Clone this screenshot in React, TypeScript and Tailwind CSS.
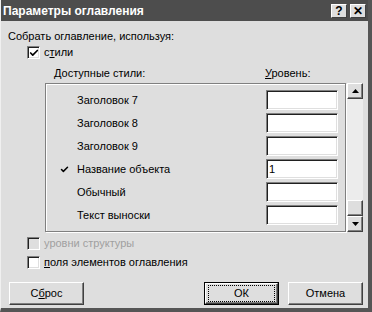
import { Check } from "lucide-react"

const font = { fontFamily: '"Liberation Sans", Arial, sans-serif' }

const rows = [
  { name: "Заголовок 7", level: "" },
  { name: "Заголовок 8", level: "" },
  { name: "Заголовок 9", level: "" },
  { name: "Название объекта", level: "1", used: true },
  { name: "Обычный", level: "" },
  { name: "Текст выноски", level: "" },
]

const CheckBox = ({ checked, disabled }: { checked?: boolean; disabled?: boolean }) => (
  <span
    className={`flex items-center justify-center size-[13px] border border-t-[#808080] border-l-[#808080] border-r-white border-b-white shadow-[inset_1px_1px_0_#202020,inset_-1px_-1px_0_#dfdfdf] ${
      disabled ? "bg-[#dedede]" : "bg-white"
    }`}
  >
    {checked && <Check size={10} strokeWidth={4} className="text-black" />}
  </span>
)

const Button = ({ label, def }: { label: React.ReactNode; def?: boolean }) => (
  <div
    className={`w-[75px] h-[23px] flex ${def ? "border border-black" : ""}`}
  >
    <div className="flex-1 flex items-center justify-center border border-t-white border-l-white border-r-[#404040] border-b-[#404040] shadow-[inset_-1px_-1px_0_#808080] bg-[#dedede]">
      {def ? (
        <span className="w-[67px] h-[17px] flex items-center justify-center border border-dotted border-black">
          {label}
        </span>
      ) : (
        label
      )}
    </div>
  </div>
)

const ScrollBtn = ({ up }: { up?: boolean }) => (
  <div className="size-[16px] flex items-center justify-center bg-[#dedede] border border-t-white border-l-white border-r-[#404040] border-b-[#404040] shadow-[inset_-1px_-1px_0_#808080]">
    <svg width="7" height="4" viewBox="0 0 7 4">
      <path d={up ? "M3.5 0 L7 4 L0 4 Z" : "M0 0 L7 0 L3.5 4 Z"} fill="#000" />
    </svg>
  </div>
)

export default function App() {
  return (
    <div
      style={font}
      className="w-[372px] h-[312px] bg-[#dedede] text-[11px] text-black flex flex-col border-l border-l-[#f0f0f0] border-r-4 border-r-[#555] border-b-4 border-b-[#555] overflow-hidden"
    >
      <div className="h-[21px] bg-[#4d4d4d] flex items-center pl-[2px] pr-[2px] shrink-0">
        <span className="text-white font-bold text-[12px] flex-1">Параметры оглавления</span>
        <div className="flex gap-[3px]">
          <div className="w-[16px] h-[14px] flex items-center justify-center bg-[#dedede] border border-t-white border-l-white border-r-[#404040] border-b-[#404040] font-bold text-[12px]">
            ?
          </div>
          <div className="w-[16px] h-[14px] flex items-center justify-center bg-[#dedede] border border-t-white border-l-white border-r-[#404040] border-b-[#404040] font-bold text-[12px]">
            ✕
          </div>
        </div>
      </div>

      <div className="flex-1 flex flex-col pl-[7px] pr-[5px] pt-[9px]">
        <div className="h-[13px] leading-[13px]">Собрать оглавление, используя:</div>

        <div className="flex items-center gap-[4px] ml-[19px] mt-[3px] h-[13px]">
          <CheckBox checked />
          <span>
            с<u>т</u>или
          </span>
        </div>

        <div className="flex mt-[8px] h-[13px] leading-[13px]">
          <span className="ml-[46px] w-[211px]">Доступные стили:</span>
          <span>
            <u>У</u>ровень:
          </span>
        </div>

        <div className="flex mt-[3px] ml-[37px]">
          <div className="w-[301px] h-[149px] border border-[#808080] shadow-[1px_1px_0_#fff,inset_1px_1px_0_#fff] pt-[6px] flex flex-col gap-[3px]">
            {rows.map((r) => (
              <div key={r.name} className="flex items-center h-[20px]">
                <span className="w-[31px] flex justify-center pl-[6px]">
                  {r.used && <Check size={9} strokeWidth={4} className="text-black" />}
                </span>
                <span className="w-[189px]">{r.name}</span>
                <div className="w-[72px] h-[20px] bg-white border border-t-[#808080] border-l-[#808080] border-r-white border-b-white shadow-[inset_1px_1px_0_#202020,inset_-1px_-1px_0_#dfdfdf] flex items-center pl-[2px]">
                  {r.level}
                </div>
              </div>
            ))}
          </div>

          <div className="ml-[1px] w-[16px] h-[149px] flex flex-col bg-[#ececec]">
            <ScrollBtn up />
            <div className="flex-1" />
            <div className="size-[16px] bg-[#dedede] border border-t-white border-l-white border-r-[#404040] border-b-[#404040] shadow-[inset_-1px_-1px_0_#808080]" />
            <ScrollBtn />
          </div>
        </div>

        <div className="flex items-center gap-[4px] ml-[19px] mt-[5px] h-[13px] text-[#a0a0a0]">
          <CheckBox disabled />
          <span>уровни структуры</span>
        </div>
        <div className="flex items-center gap-[4px] ml-[19px] mt-[6px] h-[13px]">
          <CheckBox />
          <span>
            <u>п</u>оля элементов оглавления
          </span>
        </div>

        <div className="flex mt-[13px] pl-[1px]">
          <Button
            label={
              <span>
                С<u>б</u>рос
              </span>
            }
          />
          <div className="flex-1" />
          <Button label="ОК" def />
          <div className="w-[9px]" />
          <Button label="Отмена" />
        </div>
      </div>
    </div>
  )
}
